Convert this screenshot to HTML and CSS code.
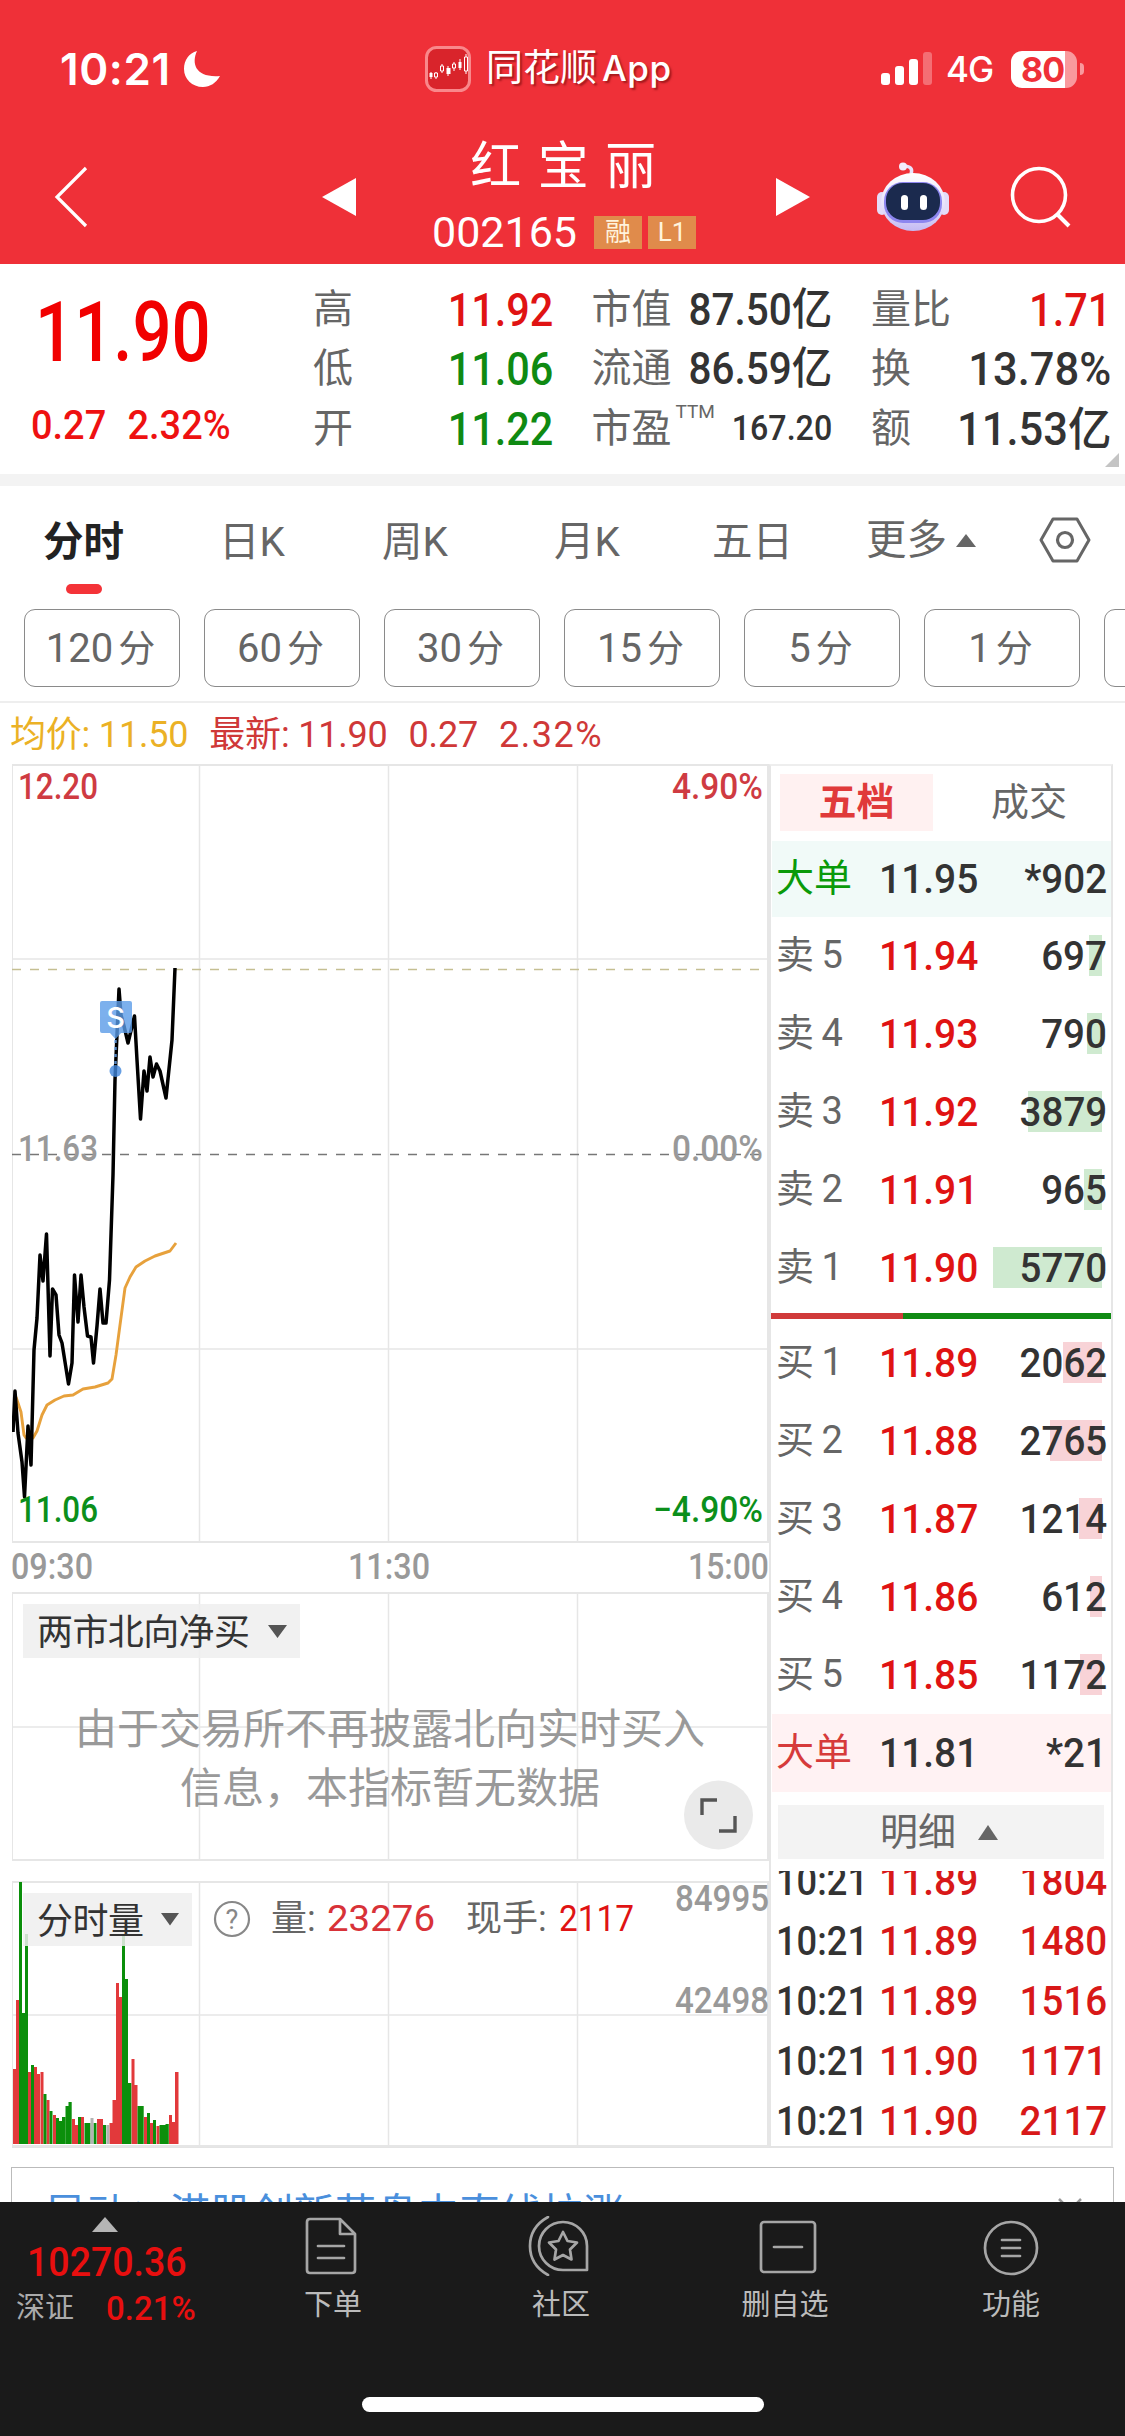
FILE: index.html
```html
<!DOCTYPE html>
<html lang="zh-CN">
<head>
<meta charset="utf-8">
<title>红宝丽 002165</title>
<link rel="stylesheet" href="styles.css">
</head>
<body>
<header class="top">
  <div class="status">
    <span class="clock">10:21</span>
    <svg class="moon" width="38" height="38" viewBox="0 0 38 38"><path d="M14 1C8 14 13 28 37 26C33 33 27 37 20 37C9 37 1 29 1 19C1 10 6 3 14 1Z" fill="#fff"/></svg>
    <svg class="appicon" width="46" height="46" viewBox="0 0 46 46"><rect x="1.5" y="1.5" width="43" height="43" rx="10" fill="#d9242b" stroke="#f9888b" stroke-width="3"/><g stroke="#fff" stroke-width="1" fill="none"><path d="M6 26v7M11 26v7M17 18v9M23 20v10M29 16v9M35 13v11M41 8v20"/><path d="M9.500 27h3v4h-3zM15.500 20h3v5h-3zM27.500 18h3v4h-3zM39.500 11h3v14h-3z" fill="#d9242b"/></g><path d="M4.500 27h3v4h-3zM21.500 22h4v6h-4zM33.500 16h3v6h-3z" fill="#fff"/></svg>
    <span class="appname">同花顺<i>App</i></span>
    <svg class="signal" width="52" height="34" viewBox="0 0 52 34"><g fill="#fff"><rect y="21" width="9" height="12" rx="3"/><rect x="14" y="14" width="9" height="19" rx="3"/><rect x="28" y="7" width="9" height="26" rx="3"/><rect x="42" y="0" width="9" height="33" rx="3" opacity=".3"/></g></svg>
    <span class="net">4G</span>
    <span class="battery"><b>80</b></span><span class="nub"></span>
  </div>
  <nav class="titlebar">
    <svg class="back" width="34" height="62" viewBox="0 0 34 62"><path d="M32 2L3 31L32 60" fill="none" stroke="#fff" stroke-width="3.200"/></svg>
    <svg class="prev" width="34" height="38" viewBox="0 0 34 38"><path d="M34 0V38L0 19Z" fill="#fff"/></svg>
    <div class="names">
      <h1>红宝丽</h1>
      <div class="code"><span>002165</span><em>融</em><em>L1</em></div>
    </div>
    <svg class="next" width="34" height="38" viewBox="0 0 34 38"><path d="M0 0V38L34 19Z" fill="#fff"/></svg>
    <svg class="robot" width="74" height="70" viewBox="0 0 74 70">
      <defs><linearGradient id="shell" x1="0" y1="0" x2="0" y2="1"><stop offset="0" stop-color="#fff"/><stop offset=".6" stop-color="#e6dffa"/><stop offset="1" stop-color="#c3b9f3"/></linearGradient></defs>
      <path d="M35 12Q38 4 27 4" fill="none" stroke="#e9e3fb" stroke-width="3.500"/><circle cx="27" cy="4.500" r="4" fill="#f3edfc"/>
      <rect x="1" y="30" width="10" height="23" rx="5" fill="#e4dcf8"/><rect x="63" y="30" width="10" height="23" rx="5" fill="#e4dcf8"/>
      <ellipse cx="37" cy="40" rx="32" ry="29" fill="url(#shell)"/>
      <rect x="8" y="20" width="58" height="41" rx="19" fill="#8d86ef"/>
      <rect x="10" y="21" width="54" height="37" rx="17" fill="#1b2a4e"/>
      <rect x="25" y="33" width="7" height="15" rx="3.500" fill="#fff"/><rect x="44" y="33" width="7" height="15" rx="3.500" fill="#fff"/>
    </svg>
    <svg class="search" width="62" height="62" viewBox="0 0 62 62"><circle cx="29" cy="29" r="26.500" fill="none" stroke="#fff" stroke-width="3.600"/><path d="M47 48L59 60" stroke="#fff" stroke-width="4"/></svg>
  </nav>
</header>

<section class="quote">
  <div class="last">
    <strong>11.90</strong>
    <p><span>0.27</span><span>2.32%</span></p>
  </div>
  <dl>
    <div><dt>高</dt><dd class="up">11.92</dd></div>
    <div><dt>低</dt><dd class="down">11.06</dd></div>
    <div><dt>开</dt><dd class="down">11.22</dd></div>
  </dl>
  <dl class="cap">
    <div><dt>市值</dt><dd>87.50亿</dd></div>
    <div><dt>流通</dt><dd>86.59亿</dd></div>
    <div><dt>市盈<sup>TTM</sup></dt><dd class="small">167.20</dd></div>
  </dl>
  <dl>
    <div><dt>量比</dt><dd class="up">1.71</dd></div>
    <div><dt>换</dt><dd class="wide">13.78%</dd></div>
    <div><dt>额</dt><dd class="wide">11.53亿</dd></div>
  </dl>
  <i class="corner"></i>
</section>

<nav class="tabs">
  <span class="on">分时</span><span>日K</span><span>周K</span><span>月K</span><span>五日</span>
  <span class="more">更多<svg width="20" height="13" viewBox="0 0 20 13"><path d="M10 0L20 13H0Z" fill="#666"/></svg></span>
  <svg class="gear" width="52" height="46" viewBox="0 0 52 46"><path d="M14 2H38L50 23L38 44H14L2 23Z" fill="none" stroke="#666" stroke-width="3" stroke-linejoin="round"/><circle cx="26" cy="23" r="7.500" fill="none" stroke="#666" stroke-width="3.200"/></svg>
</nav>
<div class="periods">
  <button>120<i>分</i></button><button>60<i>分</i></button><button>30<i>分</i></button><button>15<i>分</i></button><button>5<i>分</i></button><button>1<i>分</i></button><button></button>
</div>
<p class="legend"><span class="avg">均价: 11.50</span><span>最新: 11.90</span><span>0.27</span><span class="pct">2.32%</span></p>

<main class="board">
  <div class="charts">
    <svg class="chart" width="757" height="1384" viewBox="12 764 757 1384">
      <g stroke="#e6e6e6" stroke-width="2" fill="none">
        <path d="M12 765H768V1542H12Z M12 1593H768V1860H12Z M12 1882H768V2146H12Z"/>
        <path d="M199.500 765V1542M388.500 765V1542M577.500 765V1542M199.500 1593V1860M388.500 1593V1860M577.500 1593V1860M199.500 1882V2146M388.500 1882V2146M577.500 1882V2146" stroke-width="1.500"/>
        <path d="M12 959H768M12 1349H768M12 1727H768M12 2015H768" stroke-width="1.500"/>
      </g>
      <path d="M12 969.500H768" stroke="#c5bf92" stroke-width="1.600" stroke-dasharray="9 9"/>
      <path d="M12 1154.500H768" stroke="#777" stroke-width="1.600" stroke-dasharray="9 9"/>
      <g class="axis">
        <text x="18" y="799" textLength="80" lengthAdjust="spacingAndGlyphs" class="r">12.20</text>
        <text x="672" y="799" textLength="91" lengthAdjust="spacingAndGlyphs" class="r">4.90%</text>
        <text x="18" y="1161" textLength="80" lengthAdjust="spacingAndGlyphs">11.63</text>
        <text x="672" y="1161" textLength="91" lengthAdjust="spacingAndGlyphs">0.00%</text>
        <text x="653" y="1522" textLength="110" lengthAdjust="spacingAndGlyphs" class="g">−4.90%</text>
        <text x="11" y="1579" textLength="82" lengthAdjust="spacingAndGlyphs">09:30</text>
        <text x="348" y="1579" textLength="82" lengthAdjust="spacingAndGlyphs">11:30</text>
        <text x="688" y="1579" textLength="81" lengthAdjust="spacingAndGlyphs">15:00</text>
      </g>
      <polyline fill="none" stroke="#e7a13c" stroke-width="2.900" stroke-linejoin="round" points="16,1397 21,1412 24,1435 26,1438 33,1438 37,1431 42,1415 47,1405 55,1400 64,1396 73,1395 83,1389 95,1387 108,1383 112,1379 116,1355 120,1325 125,1288 130,1277 136,1267 145,1261 155,1256 170,1251 176,1243"/>
      <polyline fill="none" stroke="#000" stroke-width="3.500" stroke-linejoin="round" points="13,1432 15,1391 18,1433 22,1462 24.500,1497 28,1426 31,1465 34,1350 37,1318 40,1255 43,1281 46.500,1234 50,1356 52.500,1289 56,1295 59,1335 62,1343 68.500,1384 72,1363 74.500,1275 78,1322 81,1275 84,1307 87.500,1336 91,1337 93.500,1363 97,1326 100,1289 103,1323 106,1323 109.500,1280 113,1175 115,1080 119,989 121,1015 124,1026 128,1043 134.500,1016 137,1060 140.500,1119 144,1071 147,1091 150,1057 153,1077 156.500,1064 160,1071 166,1098 172,1040 175,968"/>
      <text x="18" y="1522" textLength="80" lengthAdjust="spacingAndGlyphs" class="axislow">11.06</text>
      <g opacity=".8">
        <path d="M102 1001H130Q132 1001 132 1003V1031Q132 1033 130 1033H121L115.500 1039L110 1033H102Q100 1033 100 1031V1003Q100 1001 102 1001Z" fill="#5b9ce8"/>
        <path d="M115.500 1040V1065" stroke="#6ba7ee" stroke-width="2.500" stroke-dasharray="3 4"/>
        <circle cx="115.500" cy="1071" r="6" fill="#4187dd"/>
      </g>
      <text x="115.500" y="1027.500" class="mark">S</text>

      <g fill="#e2393b"><path d="M13 2069h3v75h-3zM16 2000h3v144h-3zM28 2072h3v72h-3zM34 2067h3v77h-3zM37 2074h3v70h-3zM40.500 2072h3v72h-3zM46.500 2100h3v44h-3zM53 2115h3v29h-3zM72 2119h3v25h-3zM75 2125h3v19h-3zM81 2117h3v27h-3zM97 2119h3v25h-3zM100 2119h3v25h-3zM109.500 2123h3.200v21h-3.200zM112.500 2100h3.500v44h-3.500zM116 1983h3v161h-3zM119 1997h3v147h-3zM131.500 2059h3v85h-3zM134.500 2085h3v59h-3zM144 2117h3v27h-3zM150 2123h3v21h-3zM156.500 2126h3v18h-3zM169 2115h3v29h-3zM172 2122h3v22h-3zM175 2072h3.500v72h-3.500z"/></g>
      <g fill="#0b8f0b"><path d="M19 1882h3v262h-3zM22 2013h3v131h-3zM25 1934h3v210h-3zM31 2065h3v79h-3zM43.500 2094h3v50h-3zM49.500 2111h3v33h-3zM56 2118h3v26h-3zM59 2121h3.300v23h-3.300zM62 2117h3.300v27h-3.300zM65.500 2106h3.300v38h-3.300zM68.500 2102h3.200v42h-3.200zM78 2117h3v27h-3zM84.500 2123h3.200v21h-3.200zM87.500 2123h3v21h-3zM93.500 2123h3v21h-3zM103 2125h3v19h-3zM122 1936h3v208h-3zM125 1979h3v165h-3zM128 2083h3.300v61h-3.300zM137.500 2106h3.300v38h-3.300zM140.500 2106h3.200v38h-3.200zM147 2113h3v31h-3zM153 2120h3v24h-3zM159.500 2125h3.300v19h-3.300zM162.500 2125h3.300v19h-3.300zM165.500 2124h3.300v20h-3.300z"/></g>
      <path d="M90.500 2118h3v26h-3zM106.300 2125h3v19h-3z" fill="#b3b3b3"/>
      <g class="axis">
        <text x="675" y="1911" textLength="94" lengthAdjust="spacingAndGlyphs">84995</text>
        <text x="675" y="2013" textLength="94" lengthAdjust="spacingAndGlyphs">42498</text>
      </g>
      <rect x="23" y="1604" width="277" height="54" fill="#eee" opacity=".85"/>
      <rect x="23" y="1893" width="169" height="53" fill="#eee" opacity=".85"/>
      <g class="pick">
        <text x="37" y="1645" textLength="213">两市北向净买</text>
        <text x="37" y="1934" textLength="107">分时量</text>
      </g>
      <path d="M268 1625H287L277.500 1638ZM161 1913H179L170 1925.500Z" fill="#555"/>
      <g class="notice">
        <text x="390" y="1744">由于交易所不再披露北向实时买入</text>
        <text x="390" y="1803">信息，本指标暂无数据</text>
      </g>
      <circle cx="718.500" cy="1815" r="34.500" fill="#eaeaea"/>
      <path d="M702 1815V1800H717M719 1831H735V1816" fill="none" stroke="#555" stroke-width="3.400"/>
      <circle cx="232" cy="1919" r="17" fill="none" stroke="#888" stroke-width="2.200"/>
      <text x="232" y="1929" class="help">?</text>
      <g class="vol">
        <text x="271" y="1931">量:</text><text x="327" y="1931" textLength="108" lengthAdjust="spacingAndGlyphs" class="v1">23276</text>
        <text x="466" y="1931">现手:</text><text x="559" y="1931" textLength="75" lengthAdjust="spacingAndGlyphs" class="v2">2117</text>
      </g>
    </svg>
  </div>
  <aside class="book">
    <div class="switch"><b>五档</b><span>成交</span></div>
    <div class="row big sell"><span>大单</span><b>11.95</b><em>*902</em></div>
    <div class="row ask"><span>卖 5</span><b>11.94</b><em>697</em><i style="width:13px"></i></div>
    <div class="row ask"><span>卖 4</span><b>11.93</b><em>790</em><i style="width:15px"></i></div>
    <div class="row ask"><span>卖 3</span><b>11.92</b><em>3879</em><i style="width:74px"></i></div>
    <div class="row ask"><span>卖 2</span><b>11.91</b><em>965</em><i style="width:18px"></i></div>
    <div class="row ask"><span>卖 1</span><b>11.90</b><em>5770</em><i style="width:109px"></i></div>
    <div class="ratio"></div>
    <div class="row bid"><span>买 1</span><b>11.89</b><em>2062</em><i style="width:39px"></i></div>
    <div class="row bid"><span>买 2</span><b>11.88</b><em>2765</em><i style="width:52px"></i></div>
    <div class="row bid"><span>买 3</span><b>11.87</b><em>1214</em><i style="width:23px"></i></div>
    <div class="row bid"><span>买 4</span><b>11.86</b><em>612</em><i style="width:12px"></i></div>
    <div class="row bid"><span>买 5</span><b>11.85</b><em>1172</em><i style="width:22px"></i></div>
    <div class="row big buy"><span>大单</span><b>11.81</b><em>*21</em></div>
    <div class="detail">明细<svg width="20" height="15" viewBox="0 0 20 15"><path d="M10 0L20 15H0Z" fill="#666"/></svg></div>
    <div class="ticks">
      <div><span>10:21</span><b>11.89</b><em>1804</em></div>
      <div><span>10:21</span><b>11.89</b><em>1480</em></div>
      <div><span>10:21</span><b>11.89</b><em>1516</em></div>
      <div><span>10:21</span><b>11.90</b><em>1171</em></div>
      <div><span>10:21</span><b>11.90</b><em>2117</em></div>
    </div>
  </aside>
</main>

<div class="news"><span>异动：港股创新药盘中直线拉涨</span><svg width="24" height="24" viewBox="0 0 24 24"><path d="M1 1L23 23M23 1L1 23" stroke="#999" stroke-width="2.500"/></svg></div>

<footer class="dock">
  <div class="index">
    <svg width="26" height="15" viewBox="0 0 26 15"><path d="M13 0L26 15H0Z" fill="#b5b5b5"/></svg>
    <strong>10270.36</strong>
    <p><span>深证</span><b>0.21%</b></p>
  </div>
  <a class="trade"><svg width="52" height="58" viewBox="0 0 52 58"><path d="M5 2H35L50 17V53Q50 56 47 56H5Q2 56 2 53V5Q2 2 5 2ZM35 2V17H50M13 29H39M13 41H39"/></svg><span>下单</span></a>
  <a class="club"><svg width="62" height="60" viewBox="0 0 62 60"><path d="M35 6A24 24 0 0 0 35 54H59V30A24 24 0 0 0 35 6Z"/><path d="M20 1Q2 11 2 30T20 59"/><path d="M35 16L39.500 25L49 26.500L42 33.500L43.500 43.500L35 39L26.500 43.500L28 33.500L21 26.500L30.500 25Z"/></svg><span>社区</span></a>
  <a class="remove"><svg width="58" height="54" viewBox="0 0 58 54"><rect x="2" y="2" width="54" height="50" rx="3"/><path d="M15 27H43"/></svg><span>删自选</span></a>
  <a class="menu"><svg width="56" height="56" viewBox="0 0 56 56"><circle cx="28" cy="28" r="26"/><path d="M19 20H37M19 28H37M19 36H37"/></svg><span>功能</span></a>
  <div class="home"></div>
</footer>
</body>
</html>
```
FILE: styles.css
```css
* { box-sizing: border-box; margin: 0; padding: 0; }
body {
  width: 1125px;
  height: 2436px;
  overflow: hidden;
  background: #fff;
  color: #333;
  font-family: Roboto, "Noto Sans CJK SC", sans-serif;
}
i, em { font-style: normal; }
svg { display: block; flex: none; }
span, b, strong { white-space: nowrap; }

/* header */
.top { height: 264px; background: #ef3038; color: #fff; }
.status { height: 130px; padding: 8px 0 0 60px; display: flex; align-items: center; }
.clock { width: 123px; font: 600 44px/50px Inter, sans-serif; letter-spacing: .6px; }
.appicon { margin-left: 204px; }
.appname { width: 395px; margin-left: 15px; font-size: 37px; line-height: 50px; font-weight: 400; text-shadow: 2px 2px 2px rgba(90,0,0,.5); }
.appname i { font: 500 35px Inter, sans-serif; margin-left: 5px; letter-spacing: .5px; }
.net { margin-left: 13px; width: 65px; font: 500 35px/40px Inter, sans-serif; letter-spacing: -1px; }
.battery { width: 66px; height: 37px; border-radius: 11px; background: linear-gradient(90deg, #fff 54px, #f9999d 54px); display: flex; align-items: center; padding-left: 10px; color: #ef3038; }
.battery b { font: 700 34px/37px Inter, sans-serif; letter-spacing: -1px; }
.nub { width: 4px; height: 12px; margin-left: 3px; border-radius: 0 4px 4px 0; background: #f9999d; }
.titlebar { height: 134px; display: flex; align-items: center; }
.back { margin-left: 54px; }
.prev { margin-left: 234px; }
.names { width: 420px; height: 134px; padding-top: 4px; text-align: center; }
.names h1 { height: 66px; font-size: 51px; line-height: 66px; font-weight: 400; letter-spacing: 16.500px; padding-left: 11px; }
.code { height: 58px; padding-top: 6px; display: flex; align-items: center; padding-left: 76px; }
.code span { font-size: 43px; line-height: 50px; width: 162px; text-align: left; }
.code em { width: 48px; height: 33px; margin-right: 6px; background: #e08b4b; color: #fff3dc; font-size: 26px; line-height: 33px; }
.robot { margin-left: 66px; }
.search { margin-left: 60px; }

/* quote summary */
.quote { position: relative; height: 222px; padding-top: 16px; display: flex; border-bottom: 12px solid #f3f3f3; }
.last { width: 313px; color: #e11; }
.last strong { display: block; height: 102px; padding-left: 35px; color: #f10000; font-size: 83px; line-height: 105px; font-weight: 500; transform: scaleX(.83); transform-origin: 35px 0; }
.last p { display: flex; gap: 23px; padding-left: 31px; padding-top: 18px; font-size: 41px; line-height: 50px; font-weight: 500; transform: scaleX(.925); transform-origin: 31px 0; }
.quote dl { width: 240px; }
.quote dl + dl { margin-left: 38.500px; }
.quote dl div { height: 59.500px; display: flex; justify-content: space-between; align-items: center; }
.quote dt { color: #666; font-size: 40px; line-height: 60px; white-space: nowrap; }
.quote dd { font-size: 46px; line-height: 58px; font-weight: 500; white-space: nowrap; transform: scaleX(.9); transform-origin: 100% 0; }
.quote .wide { transform: scaleX(.945); }
.cap dd { font-size: 44px; transform: scaleX(.92); }
.quote dd.small { font-size: 35px; }
.quote dl.cap { width: 241px; }
.quote dt sup { font-size: 19px; line-height: 20px; vertical-align: 24px; margin-left: 4px; }
.quote .up { color: #e01313; }
.quote .down { color: #0f8a12; }
.corner { position: absolute; right: 6px; bottom: 7px; border-left: 14px solid transparent; border-bottom: 14px solid #c4c4c4; }

/* tabs */
.tabs { height: 123px; padding-left: 43px; display: flex; color: #666; font-size: 40.500px; }
.tabs > span { height: 108px; line-height: 112px; width: 163px; }
.tabs .on { position: relative; width: 176px; font-weight: 700; color: #222; }
.tabs .on::after { content: ""; position: absolute; left: 23px; bottom: 0; width: 36px; height: 10px; border-radius: 5px; background: #f43338; }
.tabs > span:nth-child(3) { width: 172px; }
.tabs > span:nth-child(4) { width: 158px; }
.tabs > span:nth-child(5) { width: 154px; }
.tabs .more { width: 173px; display: flex; align-items: center; }
.more svg { margin-left: 9px; }
.gear { margin-top: 31px; }
.periods { height: 94px; display: flex; gap: 24px; padding-left: 24px; overflow: hidden; border-bottom: 2px solid #eee; }
.periods button { flex: none; width: 156px; height: 78px; padding: 2px 3px 0 0; border: 1.500px solid #8a8a8a; border-radius: 11px; background: #fff; color: #666; font: 40px/70px Roboto, "Noto Sans CJK SC", sans-serif; }
.periods i { font-size: 37px; margin-left: 5px; }
.legend { height: 61px; padding-left: 10px; line-height: 65px; font-size: 36px; color: #cf3838; display: flex; gap: 21px; letter-spacing: -.2px; }
.legend .avg { color: #ebb125; }
.legend .pct { letter-spacing: 1.500px; }

/* chart column */
.board { height: 1384px; margin-left: 12px; width: 1101px; display: flex; border-bottom: 2px solid #e4e4e4; }
.charts { width: 757px; }
.axis { font-size: 36px; font-weight: 500; fill: #999; }
.axis .r { fill: #cf3b42; }
.axis .g, .axislow { fill: #0b8f1b; }
.axislow { font-size: 36px; font-weight: 500; }
.mark { font: 500 29px Inter, sans-serif; fill: #fff; text-anchor: middle; }
.pick { font-size: 36px; fill: #333; }
.notice { font-size: 42px; fill: #999; text-anchor: middle; }
.help { font-size: 27px; fill: #888; text-anchor: middle; }
.vol { font-size: 36px; fill: #666; }
.vol .v1 { fill: #d83238; }
.vol .v2 { fill: #e01313; }

/* order book */
.book { width: 344px; padding-left: 1px; border-left: 2px solid #e6e6e6; border-right: 2px solid #e6e6e6; border-top: 2px solid #eee; }
.switch { height: 75px; padding: 8px 0 0 8px; display: flex; font-size: 38px; color: #666; line-height: 57px; }
.switch b { width: 153px; height: 57px; background: #fff1f1; color: #e03a3a; text-align: center; }
.switch span { margin-left: 58px; }
.row { position: relative; height: 78px; display: flex; align-items: center; padding: 0 4px 0 4px; }
.row.big { height: 76px; }
.row span { width: 103px; font-size: 38px; line-height: 50px; color: #666; word-spacing: -2px; padding-bottom: 2px; }
.row b, .row em, .ticks div { font-size: 41px; font-weight: 500; }
.row b, .ticks b { transform: scaleX(.95); transform-origin: 0 0; }
.row em, .ticks em { transform: scaleX(.94); transform-origin: 100% 0; }
.row b { color: #e01313; }
.row em { margin-left: auto; color: #333; position: relative; z-index: 1; }
.row i { position: absolute; right: 9px; top: 18px; height: 41px; background: #cfead0; }
.bid i { background: #f8d3d7; }
.row.big b { color: #333; }
.sell { background: #f1faf8; }
.row.sell span { color: #0a9a0a; }
.row.buy { background: #fff2f3; height: 78px; }
.row.buy span { color: #d63b3b; }
.ratio { height: 6px; margin: 6px 0 5px -1px; background: linear-gradient(90deg, #d03a3a 132px, #108a14 132px); }
.detail { height: 54px; margin: 13px 7px 12px 6px; background: #f3f3f3; display: flex; align-items: center; padding-left: 102px; gap: 22px; font-size: 38px; line-height: 54px; color: #666; }
.ticks { height: 274px; overflow: hidden; padding: 0 4px 0 4px; }
.ticks div { height: 60px; line-height: 60px; display: flex; color: #d81818; }
.ticks div:first-child { margin-top: -20px; }
.ticks span { width: 103px; color: #333; transform: scaleX(.885); transform-origin: 0 0; }
.ticks b { font-weight: 500; }
.ticks em { margin-left: auto; }

/* news strip */
.news { height: 35px; margin: 19px 11px 0; padding: 16px 31px 0 33px; border: 1.500px solid #bbb; border-bottom: 0; overflow: hidden; display: flex; justify-content: space-between; color: #4a8fdc; }
.news span { font-size: 41.400px; line-height: 60px; }
.news svg { margin-top: 14px; }

/* bottom dock */
.dock { position: relative; height: 234px; background: #1a1a1a; display: flex; color: #bbb; font-size: 29px; }
.index { width: 251px; padding-top: 15px; }
.index svg { margin-left: 92px; }
.index strong { display: block; margin: 8px 0 0 27px; font-size: 41px; line-height: 44px; font-weight: 500; color: #e80f0f; transform: scaleX(.915); transform-origin: 0 0; }
.index p { display: flex; padding-left: 16px; line-height: 48px; color: #aaa; }
.index b { margin-left: 32px; font-size: 34px; font-weight: 500; color: #e80f0f; transform: scaleX(.97); transform-origin: 0 0; }
.dock a { width: 164px; height: 121px; display: flex; flex-direction: column; align-items: center; justify-content: flex-end; }
.dock a svg { fill: none; stroke: #a6a6a6; stroke-width: 2.700; stroke-linecap: round; stroke-linejoin: round; }
.dock a span { line-height: 36px; height: 36px; margin-top: 11px; }
.dock .trade svg { margin-bottom: 1px; margin-right: 5px; }
.club svg { margin-right: 4px; }
.club { margin-left: 64px; }
.remove { margin-left: 60px; }
.remove svg { margin-bottom: 2px; margin-right: -6px; }
.menu { margin-left: 62px; }
.home { position: absolute; left: 362px; top: 195px; width: 402px; height: 15px; border-radius: 8px; background: #fff; }
```
